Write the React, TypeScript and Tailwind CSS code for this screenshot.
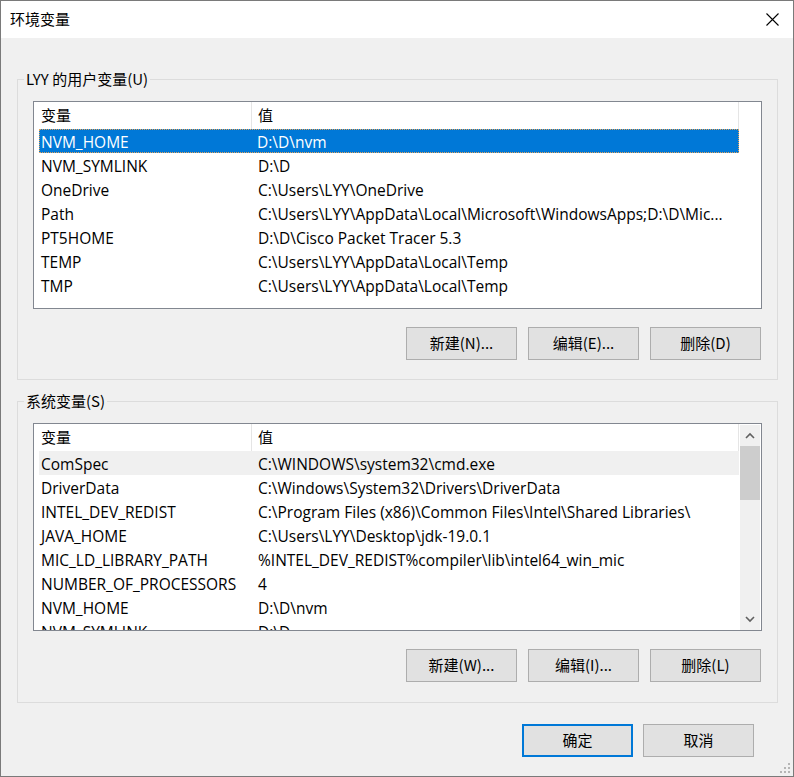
import type { ReactNode } from 'react'

type EnvRow = readonly [string, string]

const USER_VARS: ReadonlyArray<EnvRow> = [
  ['NVM_HOME', 'D:\\D\\nvm'],
  ['NVM_SYMLINK', 'D:\\D'],
  ['OneDrive', 'C:\\Users\\LYY\\OneDrive'],
  ['Path', 'C:\\Users\\LYY\\AppData\\Local\\Microsoft\\WindowsApps;D:\\D\\Mic...'],
  ['PT5HOME', 'D:\\D\\Cisco Packet Tracer 5.3'],
  ['TEMP', 'C:\\Users\\LYY\\AppData\\Local\\Temp'],
  ['TMP', 'C:\\Users\\LYY\\AppData\\Local\\Temp'],
]

const SYSTEM_VARS: ReadonlyArray<EnvRow> = [
  ['ComSpec', 'C:\\WINDOWS\\system32\\cmd.exe'],
  ['DriverData', 'C:\\Windows\\System32\\Drivers\\DriverData'],
  ['INTEL_DEV_REDIST', 'C:\\Program Files (x86)\\Common Files\\Intel\\Shared Libraries\\'],
  ['JAVA_HOME', 'C:\\Users\\LYY\\Desktop\\jdk-19.0.1'],
  ['MIC_LD_LIBRARY_PATH', '%INTEL_DEV_REDIST%compiler\\lib\\intel64_win_mic'],
  ['NUMBER_OF_PROCESSORS', '4'],
  ['NVM_HOME', 'D:\\D\\nvm'],
  ['NVM_SYMLINK', 'D:\\D'],
]

function Chevron({ up }: { readonly up?: boolean }) {
  return (
    <svg width="10" height="7" viewBox="0 0 10 7" aria-hidden="true">
      <polyline
        points={up ? '1,6 5,2 9,6' : '1,1 5,5 9,1'}
        fill="none"
        stroke="#606060"
        strokeWidth="1.6"
      />
    </svg>
  )
}

function Scrollbar() {
  return (
    <div className="mt-[1px] flex h-[205px] w-[20px] shrink-0 flex-col bg-[#f0f0f0]">
      <div className="flex h-[21px] items-center justify-center">
        <Chevron up />
      </div>
      <div className="h-[54px] bg-[#cdcdcd]" />
      <div className="flex-1" />
      <div className="flex h-[21px] items-center justify-center">
        <Chevron />
      </div>
    </div>
  )
}

interface EnvListProps {
  readonly rows: ReadonlyArray<EnvRow>
  readonly selectedIndex?: number
  readonly hoverIndex?: number
  readonly withScrollbar?: boolean
}

function EnvList({ rows, selectedIndex, hoverIndex, withScrollbar }: EnvListProps) {
  return (
    <div className="flex h-[208px] w-[729px] border border-[#828790] bg-white">
      <div className="h-full w-[706px] shrink-0 overflow-hidden pl-[5px]">
        <div className="flex h-[27px] w-[700px] items-center font-['Noto_Sans_CJK_SC',sans-serif] text-[15px]">
          <div className="w-[212px] pl-[2px]">变量</div>
          <div className="flex h-full w-[488px] items-center border-x border-[#e5e5e5] pl-[6px]">值</div>
        </div>
        {rows.map(([name, value], index) => {
          const isSelected = index === selectedIndex
          const isHover = index === hoverIndex
          return (
            <div
              key={`${name}-${index}`}
              className={`flex h-[24px] w-[700px] items-center whitespace-nowrap pt-[1px] font-['Open_Sans','Noto_Sans_CJK_SC',sans-serif] text-[15.5px] leading-[22px] ${
                isSelected
                  ? 'border border-dotted border-[#e3a35a] bg-[#0078d7] text-white'
                  : isHover
                    ? 'bg-[#f0f0f0]'
                    : ''
              }`}
            >
              <div className={`w-[212px] shrink-0 overflow-hidden ${isSelected ? 'pl-[1px]' : 'pl-[2px]'}`}>
                {name}
              </div>
              <div className={`min-w-0 flex-1 truncate ${isSelected ? 'pl-[5px]' : 'pl-[7px]'}`}>{value}</div>
            </div>
          )
        })}
      </div>
      {withScrollbar ? <Scrollbar /> : null}
    </div>
  )
}

function DialogButton({ children, primary }: { readonly children: ReactNode; readonly primary?: boolean }) {
  return (
    <button
      type="button"
      className={`flex h-[33px] w-[111px] items-center justify-center bg-[#e1e1e1] text-[15px] text-black ${
        primary ? 'border-2 border-[#0078d7]' : 'border border-[#adadad]'
      }`}
    >
      {children}
    </button>
  )
}

interface GroupProps {
  readonly legend: string
  readonly children: ReactNode
  readonly bottomPad: string
}

function Group({ legend, children, bottomPad }: GroupProps) {
  return (
    <section className={`relative border border-[#dcdcdc] pl-[15px] pt-[21px] ${bottomPad}`}>
      <span className="absolute left-[6px] top-[-11px] bg-[#f0f0f0] px-[2px] text-[15px] leading-[20px]">
        {legend}
      </span>
      {children}
    </section>
  )
}

export default function App() {
  return (
    <div className="relative flex h-[777px] w-[794px] flex-col border border-[#7a7a7a] bg-[#f0f0f0] font-['Noto_Sans_CJK_SC',sans-serif] text-black">
      <header className="flex h-[37px] shrink-0 items-center justify-between bg-white pl-[9px] pr-[14px]">
        <span className="text-[15px]">环境变量</span>
        <svg width="13" height="13" viewBox="0 0 13 13" aria-label="关闭">
          <path d="M0.5 0.5 L12.5 12.5 M12.5 0.5 L0.5 12.5" stroke="#000" strokeWidth="1.1" />
        </svg>
      </header>

      <main className="flex flex-1 flex-col pl-[16px] pr-[15px] pt-[41px]">
        <Group legend="LYY 的用户变量(U)" bottomPad="pb-[19px]">
          <EnvList rows={USER_VARS} selectedIndex={0} />
          <div className="mt-[18px] flex w-[728px] justify-end gap-[11px]">
            <DialogButton>新建(N)...</DialogButton>
            <DialogButton>编辑(E)...</DialogButton>
            <DialogButton>删除(D)</DialogButton>
          </div>
        </Group>

        <div className="mt-[21px]">
          <Group legend="系统变量(S)" bottomPad="pb-[20px]">
            <EnvList rows={SYSTEM_VARS} hoverIndex={0} withScrollbar />
            <div className="mt-[18px] flex w-[728px] justify-end gap-[11px]">
              <DialogButton>新建(W)...</DialogButton>
              <DialogButton>编辑(I)...</DialogButton>
              <DialogButton>删除(L)</DialogButton>
            </div>
          </Group>
        </div>

        <div className="mt-[21px] flex justify-end gap-[10px] pr-[24px]">
          <DialogButton primary>确定</DialogButton>
          <DialogButton>取消</DialogButton>
        </div>
      </main>

      <svg
        className="absolute bottom-[2px] right-[2px]"
        width="12"
        height="12"
        viewBox="0 0 12 12"
        aria-hidden="true"
      >
        <rect x="9" y="1" width="2" height="2" fill="#b5b5b5" />
        <rect x="5" y="5" width="2" height="2" fill="#b5b5b5" />
        <rect x="9" y="5" width="2" height="2" fill="#b5b5b5" />
        <rect x="1" y="9" width="2" height="2" fill="#b5b5b5" />
        <rect x="5" y="9" width="2" height="2" fill="#b5b5b5" />
        <rect x="9" y="9" width="2" height="2" fill="#b5b5b5" />
      </svg>
    </div>
  )
}
